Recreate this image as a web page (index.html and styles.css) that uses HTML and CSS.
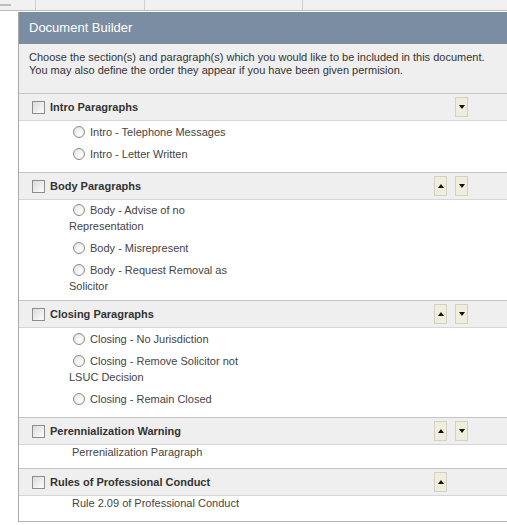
FILE: index.html
```html
<!DOCTYPE html>
<html lang="en">
<head>
<meta charset="utf-8">
<title>Document Builder</title>
<link rel="stylesheet" href="styles.css">
</head>
<body>
<div class="tabstrip">
  <span class="tab tab-grip"><span class="grip"></span></span>
  <span class="tab tab-a"></span>
  <span class="tab tab-b"></span>
  <span class="tab tab-c"></span>
</div>

<div class="builder">
  <div class="builder-title">Document Builder</div>
  <div class="builder-help">Choose the section(s) and paragraph(s) which you would like to be included in this document.<br>You may also define the order they appear if you have been given permision.</div>

  <div class="group">
    <div class="group-head">
      <input type="checkbox" class="chk">
      <span class="group-name">Intro Paragraphs</span>
      <div class="order">
        <span class="slot"></span>
        <button class="move move-down" type="button" title="Move down"></button>
      </div>
    </div>
    <ul class="group-items">
      <li><input type="radio" class="opt" name="intro">Intro - Telephone Messages</li>
      <li><input type="radio" class="opt" name="intro">Intro - Letter Written</li>
    </ul>
  </div>

  <div class="group">
    <div class="group-head">
      <input type="checkbox" class="chk">
      <span class="group-name">Body Paragraphs</span>
      <div class="order">
        <button class="move move-up" type="button" title="Move up"></button>
        <button class="move move-down" type="button" title="Move down"></button>
      </div>
    </div>
    <ul class="group-items compact">
      <li><input type="radio" class="opt" name="body">Body - Advise of no Representation</li>
      <li><input type="radio" class="opt" name="body">Body - Misrepresent</li>
      <li><input type="radio" class="opt" name="body">Body - Request Removal as Solicitor</li>
    </ul>
  </div>

  <div class="group">
    <div class="group-head">
      <input type="checkbox" class="chk">
      <span class="group-name">Closing Paragraphs</span>
      <div class="order">
        <button class="move move-up" type="button" title="Move up"></button>
        <button class="move move-down" type="button" title="Move down"></button>
      </div>
    </div>
    <ul class="group-items">
      <li><input type="radio" class="opt" name="closing">Closing - No Jurisdiction</li>
      <li><input type="radio" class="opt" name="closing">Closing - Remove Solicitor not LSUC Decision</li>
      <li><input type="radio" class="opt" name="closing">Closing - Remain Closed</li>
    </ul>
  </div>

  <div class="group">
    <div class="group-head">
      <input type="checkbox" class="chk">
      <span class="group-name">Perennialization Warning</span>
      <div class="order">
        <button class="move move-up" type="button" title="Move up"></button>
        <button class="move move-down" type="button" title="Move down"></button>
      </div>
    </div>
    <ul class="group-items plain">
      <li>Perrenialization Paragraph</li>
    </ul>
  </div>

  <div class="group">
    <div class="group-head">
      <input type="checkbox" class="chk">
      <span class="group-name">Rules of Professional Conduct</span>
      <div class="order">
        <button class="move move-up" type="button" title="Move up"></button>
        <span class="slot"></span>
      </div>
    </div>
    <ul class="group-items plain last">
      <li>Rule 2.09 of Professional Conduct</li>
    </ul>
  </div>
</div>
</body>
</html>
```

FILE: styles.css
```css
html, body {
  margin: 0;
  padding: 0;
  background: #ffffff;
}

body {
  font-family: "Liberation Sans", Arial, sans-serif;
  font-size: 11px;
  color: #3a3a3a;
}

/* strip of tabs above the panel */
.tabstrip {
  display: flex;
  height: 10px;
  background: #f1f1f1;
  border-bottom: 1px solid #bdbdbd;
}

.tab {
  height: 10px;
  border-right: 1px solid #cfcfcf;
}

.tab-grip {
  width: 35px;
  display: flex;
  align-items: center;
}

.grip {
  width: 11px;
  height: 2px;
  background: #bdbdbd;
}

.tab-a { width: 108px; }
.tab-b { width: 157px; }
.tab-c { flex: 1; border-right: 0; }

/* builder panel */
.builder {
  margin: 1px 0 0 18px;
  border-left: 1px solid #a9a9a9;
}

.builder-title {
  height: 32px;
  line-height: 32px;
  padding-left: 10px;
  background: #7a8da2;
  color: #ffffff;
  font-size: 13px;
}

.builder-help {
  height: 42px;
  padding: 7px 10px 0;
  background: #efefef;
  line-height: 13px;
  color: #333333;
}

.group-head {
  display: flex;
  align-items: center;
  height: 26px;
  padding: 0 39px 0 13px;
  background: #efefef;
  border-top: 1px solid #c4c4c4;
  border-bottom: 1px solid #d6d6d6;
}

.chk {
  appearance: none;
  -webkit-appearance: none;
  width: 13px;
  height: 13px;
  margin: 0 5px 0 0;
  border: 1px solid #8d8d8d;
  background: linear-gradient(135deg, #dadada, #f7f7f7 80%);
  box-sizing: border-box;
}

.group-name {
  font-weight: bold;
  color: #333333;
}

.order {
  margin-left: auto;
  display: flex;
  gap: 8px;
}

.slot,
.move {
  width: 13px;
  height: 20px;
  box-sizing: border-box;
}

.move {
  display: flex;
  align-items: center;
  justify-content: center;
  padding: 0;
  margin: 0;
  border: 1px solid #d3d2c2;
  background: #efeedd;
  cursor: pointer;
}

.move::before {
  content: "";
  width: 0;
  height: 0;
  border-left: 3px solid transparent;
  border-right: 3px solid transparent;
}

.move-up::before {
  border-bottom: 4px solid #111111;
}

.move-down::before {
  border-top: 4px solid #111111;
}

.group-items {
  list-style: none;
  margin: 0;
  padding: 3px 0 4px 50px;
}

.group-items li {
  width: 176px;
  line-height: 16px;
  margin-bottom: 6px;
  color: #444444;
}

/* a list ending on a wrapped line sits tighter */
.group-items.compact {
  padding-top: 2px;
  padding-bottom: 0;
}

.opt {
  appearance: none;
  -webkit-appearance: none;
  width: 12px;
  height: 12px;
  margin: 0 5px 0 4px;
  vertical-align: -2px;
  border: 1px solid #8c8c8c;
  border-radius: 50%;
  background: radial-gradient(circle at 65% 65%, #ffffff, #e2e2e2 90%);
  box-sizing: border-box;
}

.group-items.plain {
  padding: 0 0 9px 53px;
}

.group-items.plain li {
  width: auto;
  margin: 0;
  line-height: 14px;
}

.group-items.last {
  padding-bottom: 11px;
  border-bottom: 1px solid #b5b5b5;
}
```
